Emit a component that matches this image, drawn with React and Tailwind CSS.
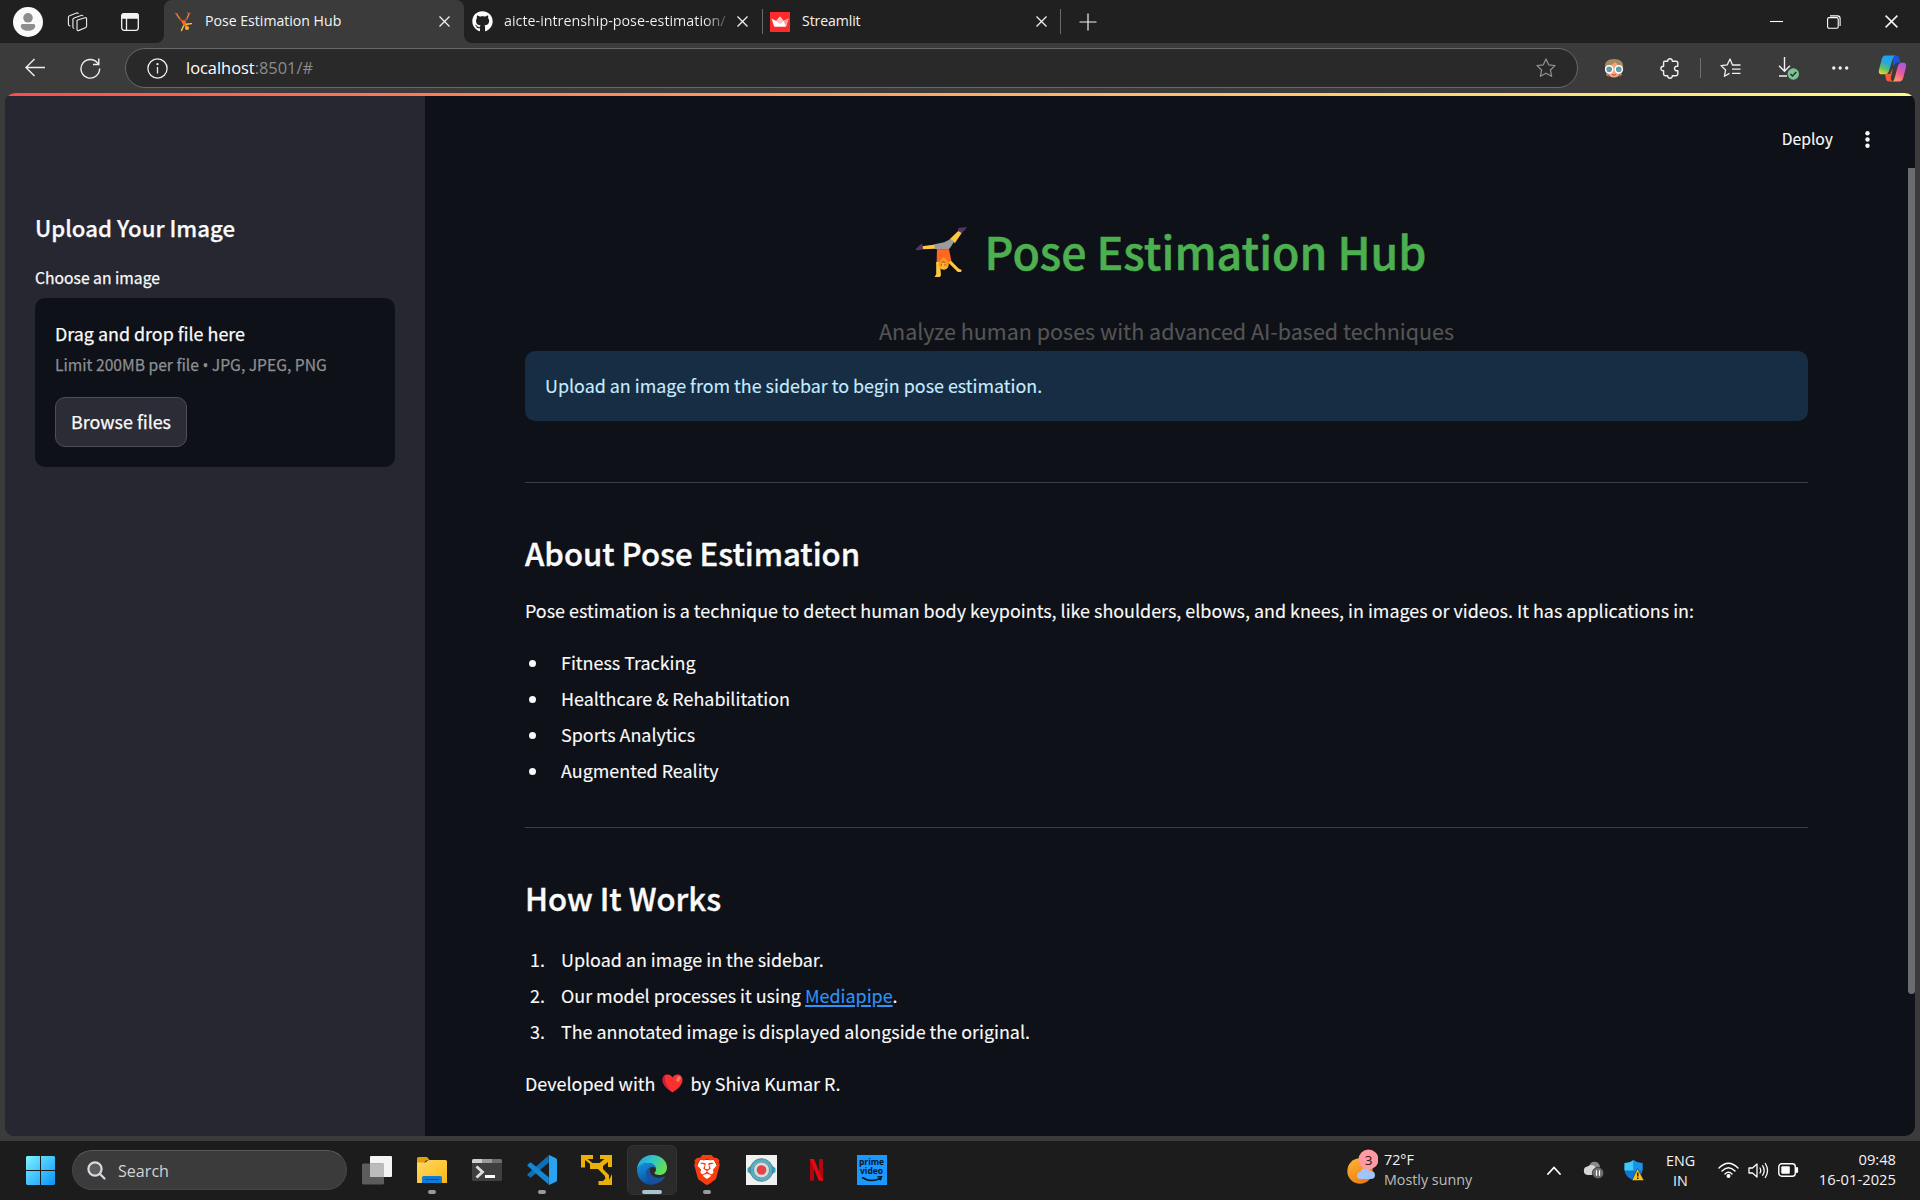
import React from "react";
import { FaGithub } from "react-icons/fa";
import { SiBrave } from "react-icons/si";

const CloseIcon = ({ size = 11 }) => (
  <svg width={size} height={size} viewBox="0 0 11 11" fill="none" stroke="#f2f2f2" strokeWidth="1.3">
    <path d="M.5.5l10 10M10.5.5l-10 10" />
  </svg>
);

const TabFavicon = () => (
  <svg width="18" height="20" viewBox="0 0 18 20" fill="none" strokeLinecap="round">
    <path d="M1.500 2.200L5 7M14 2l-2 4.500" stroke="#e8913c" strokeWidth="1.300" />
    <path d="M5 7l4 4 2.500-4" stroke="#b5502e" strokeWidth="2" />
    <path d="M8.500 10l1.800 3" stroke="#ff6723" strokeWidth="3.400" />
    <path d="M8.500 14l-2 4.500M11.500 12.200l5-.6" stroke="#ffc83d" strokeWidth="1.400" />
    <circle cx="12" cy="16" r="2" fill="#ffb02e" />
    <path d="M.5 1.300l2 .6M12.500 1l2.500.3" stroke="#d9482b" strokeWidth="1.300" />
  </svg>
);

const Cartwheel = () => (
  <svg className="mt-0.5" width="52" height="50" viewBox="138 80 130 151" preserveAspectRatio="none">
    <path d="M155 138l34-5v13l-34 1z" fill="#ffc83d" />
    <path d="M139 147l14-16 4 2 1 14-14 4z" fill="#533566" />
    <path d="M224 118l24-28 8 6-18 32z" fill="#ffc83d" />
    <path d="M246 83l22-3-5 9-9 9-8-6z" fill="#533566" />
    <path d="M187 132l24-6 16-10 9 8-10 19-4 5h-28l-7-2z" fill="#9b9b9b" />
    <path d="M193 147h30l6 36-8 8h-29z" fill="#ff6723" />
    <path d="M191 186h9l3 40-3 5h-13l4-8z" fill="#ffc83d" />
    <path d="M221 187l7-5 19 23 8 5-2 6h-8z" fill="#ffc83d" />
    <path d="M209 171c6 7 13 12 13 23 0 9-5 15-13 15s-12-6-12-14c0-10 7-15 12-24z" fill="#ffb02e" />
    <path d="M209 171c-5 9-12 14-12 24l4 8c0-9 3-14 8-19 5 5 8 10 8 18l5-8c0-11-7-16-13-23z" fill="#f59a1c" />
    <path d="M204 192v5M213 192v5M204 187q4-4 9 0" stroke="#6b3a1e" strokeWidth="2" fill="none" />
  </svg>
);

const Heart = () => (
  <svg width="21" height="19" viewBox="0 0 21 19">
    <path d="M10.500 18.500C6 15.500.5 11.500.5 6 .5 2.500 2.800.5 5.500.5c2.200 0 4 1.200 5 3 1-1.800 2.800-3 5-3 2.700 0 5 2 5 5.500 0 5.500-5.500 9.500-10 12.500z" fill="#f8312f" />
    <path d="M10.500 18.500C6 15.500.5 11.500.5 6 .5 3.500 1.600 1.800 3.200 1 2 7 5 13 10.500 18.500z" fill="#ca0b4a" opacity=".7" />
    <ellipse cx="16.500" cy="5" rx="2" ry="3" transform="rotate(25 16.500 5)" fill="#f37366" />
  </svg>
);

const TabStrip = () => (
  <div className="flex h-[43px] items-stretch bg-[#202020] text-[#f4f4f4]">
    <div className="flex w-[156px] items-center pl-[13px]">
      <svg width="30" height="30" viewBox="0 0 30 30">
        <circle cx="15" cy="15" r="15" fill="#fafafa" />
        <circle cx="15" cy="10.800" r="4.800" fill="#8d8d8d" />
        <path d="M9.500 17h11a1.700 1.700 0 0 1 1.700 1.700c0 3.300-3.200 5-7.200 5s-7.200-1.700-7.200-5A1.700 1.700 0 0 1 9.500 17z" fill="#8d8d8d" />
      </svg>
      <svg className="ml-6" width="21" height="22" viewBox="0 0 22 22" fill="none" stroke="#e8e8e8" strokeWidth="1.200" strokeLinejoin="round" strokeLinecap="round">
        <path d="M10.500 9.200L18.700 6.500q1.800-.4 1.800 1.300v7.700q0 1.200-1.200 1.600l-6.800 2.700q-2 .7-2-1.200v-8z" />
        <path d="M7.200 17.500q-1 0-1-1.200V8.500q0-1.200 1.200-1.600l7.300-2.800q1.200-.4 1.800.3" />
        <path d="M3 15q-1.500-.2-1.500-1.500V6q0-1.200 1.200-1.600l7.300-2.800q1.200-.3 1.700.5" />
      </svg>
      <svg className="ml-[33px]" width="18" height="18" viewBox="0 0 18 18" fill="none" stroke="#f2f2f2" strokeWidth="1.300">
        <rect x=".7" y=".7" width="16.600" height="16.600" rx="2.500" />
        <path d="M.7 5V3A2.300 2.300 0 0 1 3 .7h12A2.300 2.300 0 0 1 17.300 3v2z" fill="#f2f2f2" />
        <path d="M5.500 5v12" />
      </svg>
    </div>
    <div className="w-2 bg-[#3b3b3b]">
      <div className="h-full w-2 rounded-br-lg bg-[#202020]" />
    </div>
    <div className="flex w-[300px] items-center rounded-t-lg bg-[#3b3b3b] pr-[14px] pl-[11px]">
      <TabFavicon />
      <span className="ml-3 flex-1 pb-0.5 text-[14.1px] leading-5">Pose Estimation Hub</span>
      <CloseIcon />
    </div>
    <div className="w-2 bg-[#3b3b3b]">
      <div className="h-full w-2 rounded-bl-lg bg-[#202020]" />
    </div>
    <div className="flex w-[291px] items-center">
      <FaGithub className="size-[21px] text-white" />
      <span className="ml-[11px] w-[222px] overflow-hidden bg-gradient-to-r from-[#f4f4f4] from-90% to-[#555555] bg-clip-text pb-0.5 text-[14.300px] leading-5 whitespace-nowrap text-transparent">
        aicte-intrenship-pose-estimation/
      </span>
      <span className="ml-[11px]"><CloseIcon /></span>
      <span className="ml-[14px] h-[25px] w-px bg-[#6a6a6a]" />
    </div>
    <div className="flex w-[298px] items-center pl-[7px]">
      <svg width="20" height="20" viewBox="0 0 20 20">
        <rect width="20" height="20" fill="#ff2b2b" />
        <path d="M1.500 6.500l4.700 2.600L10 4.500l3.600 4.600 5-2.600-2.400 7.500q-.2.700-.9.700H4.800q-.6 0-.8-.7z" fill="#fff" />
        <path d="M10 4.500l3.600 4.600-3.600 3-3.800-3z" fill="#ffc3c3" />
        <path d="M13.600 9.100l5-2.600-2.600 8z" fill="#ff9d9d" />
      </svg>
      <span className="ml-3 flex-1 pb-0.5 text-[14.100px] leading-5 tracking-[-0.1px]">Streamlit</span>
      <CloseIcon />
      <span className="ml-[13px] h-[25px] w-px bg-[#6a6a6a]" />
    </div>
    <div className="flex flex-1 items-center pl-[18px]">
      <svg width="18" height="18" viewBox="0 0 18 18" stroke="#f2f2f2" strokeWidth="1.200">
        <path d="M9 .5v17M.5 9h17" />
      </svg>
    </div>
    <div className="flex items-center pr-[22px]">
      <svg width="13" height="13" viewBox="0 0 13 13" stroke="#fff" strokeWidth="1.100"><path d="M0 6.500h13" /></svg>
      <svg className="ml-11" width="14" height="14" viewBox="0 0 14 14" fill="none" stroke="#fff" strokeWidth="1.100">
        <rect x=".6" y="2.600" width="10.600" height="10.600" rx="1.500" />
        <path d="M3 .9h7.500a2.600 2.600 0 0 1 2.600 2.600V11" />
      </svg>
      <span className="ml-11"><CloseIcon size={13} /></span>
    </div>
  </div>
);

const STAR = "M10 1l2.700 5.800 6.300.8-4.600 4.400 1.200 6.300L10 15.200l-5.600 3.100L5.600 12 1 7.600l6.300-.8z";

const Toolbar = () => (
  <div className="flex h-[50px] items-center bg-[#3b3b3b]">
    <svg className="ml-[25px]" width="20" height="20" viewBox="0 0 20 20" fill="none" stroke="#f0f0f0" strokeWidth="1.400">
      <path d="M20 9.500H1M9.500 1L1 9.500l8.500 8.500" />
    </svg>
    <svg className="ml-[35px]" width="21" height="21" viewBox="0 0 21 21" fill="none" stroke="#f0f0f0" strokeWidth="1.400">
      <path d="M18.300 6A9.300 9.300 0 1 0 19.600 10.500M18.800.5V6.500H13" />
    </svg>
    <div className="ml-6 flex h-10 w-[1453px] items-center rounded-full border border-[#686868] bg-[#292929] px-[21px]">
      <svg width="21" height="21" viewBox="0 0 21 21" fill="none" stroke="#f0f0f0" strokeWidth="1.300">
        <circle cx="10.500" cy="10.500" r="9.600" />
        <path d="M10.500 9v6.500" />
        <circle cx="10.500" cy="6.200" r=".5" fill="#f0f0f0" />
      </svg>
      <span className="ml-[18px] flex-1 text-[16.400px] leading-5 text-[#8c8c8c]"><span className="text-white">localhost</span>:8501/#</span>
      <svg width="20" height="20" viewBox="0 0 20 20" fill="none" stroke="#8f8f8f" strokeWidth="1.300" strokeLinejoin="round"><path d={STAR} /></svg>
    </div>
    <svg className="ml-[26px]" width="20" height="19" viewBox="0 0 20 19">
      <path d="M1 9C0 3 4 0 10 0s10 3 9 9l-2 5H3z" fill="#a58a5f" />
      <path d="M3 7q6-1 8-4 2 3 6 4l-.5 7q-2 4.500-6.500 4.500T3.500 14z" fill="#f0a67c" />
      <path d="M3 12l-1 4 3 2zM17 12l1 4-3 2z" fill="#c97b52" />
      <circle cx="5.200" cy="10.300" r="3.600" fill="#5b9bab" stroke="#fff" strokeWidth="1.500" />
      <circle cx="14.800" cy="10.300" r="3.600" fill="#5b9bab" stroke="#fff" strokeWidth="1.500" />
      <path d="M8 15.500q2 1.400 4 0" stroke="#c24a3b" fill="none" />
    </svg>
    <svg className="ml-9" width="20" height="21" viewBox="0 0 20 21" fill="none" stroke="#f0f0f0" strokeWidth="1.400" strokeLinejoin="round">
      <path d="M4.500 3.300h3.200C7.500 1.800 8.500.8 10 .8s2.500 1 2.300 2.500H16q1.800 0 1.800 1.800v3.200c-1.800-.4-3.300.5-3.300 2.200s1.500 2.600 3.300 2.200V16q0 1.700-1.800 1.700h-3.700c.2 1.500-.8 2.500-2.300 2.500s-2.500-1-2.300-2.500H5.300Q3.600 17.700 3.600 16v-3.200C1.900 12.800.9 12 .9 10.500s1-2.300 2.700-2.300V5q0-1.700.9-1.700z" />
    </svg>
    <span className="ml-5 h-5 w-px bg-[#707070]" />
    <svg className="ml-[19px]" width="21" height="20" viewBox="0 0 21 20" fill="none" stroke="#f0f0f0" strokeWidth="1.300" strokeLinejoin="round">
      <path d="M13 6.800L12.400 6.700 10 1 7.300 6.800 1 7.600 5.600 12 4.400 18.300 9.500 15.400M12 7h8.500M12 11.200h8.500M12 15.400h8.500" />
    </svg>
    <svg className="ml-[37px]" width="22" height="24" viewBox="0 0 22 24" fill="none" stroke="#f0f0f0" strokeWidth="1.400">
      <path d="M6.500 1v14M1 9.800l5.500 5.500L12 9.800M1 20h8" />
      <circle cx="15.300" cy="18" r="5.700" fill="#7bc492" stroke="none" />
      <path d="M12.500 18l2 2 3.800-4" stroke="#2a2a2a" />
    </svg>
    <svg className="ml-8" width="17" height="4" viewBox="0 0 17 4" fill="#f0f0f0">
      <circle cx="1.800" cy="2" r="1.700" /><circle cx="8.200" cy="2" r="1.700" /><circle cx="14.700" cy="2" r="1.700" />
    </svg>
    <svg className="ml-[29px]" width="29" height="27" viewBox="0 0 29 27">
      <defs>
        <linearGradient id="cpA" x1=".6" y1="0" x2=".2" y2="1"><stop offset="0" stopColor="#18a5f2" /><stop offset=".4" stopColor="#2aa6dc" /><stop offset=".7" stopColor="#5fbf6a" /><stop offset="1" stopColor="#f4d51f" /></linearGradient>
        <linearGradient id="cpB" x1=".8" y1="0" x2=".3" y2="1"><stop offset="0" stopColor="#a256ea" /><stop offset=".5" stopColor="#e8589e" /><stop offset="1" stopColor="#ffa05c" /></linearGradient>
      </defs>
      <path d="M15 .5h3.500c1.700 0 2.300 1.200 2.700 2.700l1.300 4.300H19l-4 4z" fill="#1f52d8" />
      <path d="M7 19h5l3-6-2 9c-.3 2 .3 4.500 2.500 4.500H11c-2 0-2.700-1.300-3.200-3z" fill="#f35a3a" />
      <path d="M7.500.5H18c-2 0-2.800 1.700-3.300 3.300L11 16c-.7 2-1.800 3.300-4 3.300H3.700C.8 19.300.4 17 1.200 14L3.800 4C4.400 1.800 5.500.5 7.500.5z" fill="url(#cpA)" />
      <path d="M21.500 26.500H13.500c2 0 2.500-1.200 3-3l3.300-12.300c.7-2.200 1.700-3.500 4-3.500h1.500c2.900 0 3.300 2.300 2.500 5.300l-2.600 10c-.6 2.200-1.700 3.500-3.700 3.500z" fill="url(#cpB)" />
    </svg>
  </div>
);

const Sidebar = () => (
  <aside className="flex w-[420px] flex-col bg-[#262730] px-[30px] pt-[116px] text-[#fafafa] [-webkit-text-stroke:0.25px_currentColor]">
    <h2 className="text-[22.200px] leading-[30px] font-medium">Upload Your Image</h2>
    <label className="mt-6 text-[15.700px] leading-6">Choose an image</label>
    <div className="mt-2 flex h-[169px] w-[360px] flex-col items-start rounded-[10px] bg-[#0e1117] px-5 pt-[21px]">
      <span className="text-[17.900px] leading-7">Drag and drop file here</span>
      <span className="mt-[6px] text-[15.650px] leading-6 whitespace-nowrap text-[#8d8e92]">
        Limit 200MB per file <span className="font-['Open_Sans']">•</span> JPG, JPEG, PNG
      </span>
      <button className="mt-5 flex h-[50px] w-[132px] items-center justify-center rounded-[10px] border border-[#4d4e57] bg-[#2b2c36] pb-[3px] text-[17.900px] leading-7">
        Browse files
      </button>
    </div>
  </aside>
);

const uses = ["Fitness Tracking", "Healthcare & Rehabilitation", "Sports Analytics", "Augmented Reality"];

const steps = [
  "Upload an image in the sidebar.",
  <>Our model processes it using <a className="text-[#2f93f5] underline decoration-2 underline-offset-2">Mediapipe</a>.</>,
  "The annotated image is displayed alongside the original.",
];

const Heading = ({ children }) => (
  <h3 className="mt-[50px] text-[31.100px] leading-10 font-medium [-webkit-text-stroke:0.4px_#fafafa]">{children}</h3>
);

const Main = () => (
  <main className="flex flex-1 text-[17.920px] text-[#fafafa] [-webkit-text-stroke:0.12px_currentColor]">
    <div className="flex w-[1383px] shrink-0 flex-col pl-[100px]">
      <h1 className="mt-[127px] flex h-14 items-center justify-center pl-2 text-[44.700px] leading-[56px] font-medium text-[#4caf50] [-webkit-text-stroke:0.5px_#4caf50]">
        <Cartwheel />
        <span className="ml-[18px]">Pose Estimation Hub</span>
      </h1>
      <p className="mt-[35px] text-center text-[21.500px] leading-[34px] text-[#555555]">Analyze human poses with advanced AI-based techniques</p>
      <div className="mt-[3px] h-[70px] rounded-[10px] bg-[#172d43] px-5 pt-5 text-[17.900px] leading-7 text-[#c7ebff]">
        Upload an image from the sidebar to begin pose estimation.
      </div>
      <hr className="mt-[61px] border-[#3b3e44]" />
      <Heading>About Pose Estimation</Heading>
      <p className="mt-[22px] leading-[30px] whitespace-nowrap">
        Pose estimation is a technique to detect human body keypoints, like shoulders, elbows, and knees, in images or videos. It has applications in:
      </p>
      <ul className="mt-[19px]">
        {uses.map((u) => (
          <li key={u} className="flex items-center leading-9">
            <span className="mt-0.5 mr-[25px] ml-1 size-[7px] rounded-full bg-[#fafafa]" />
            {u}
          </li>
        ))}
      </ul>
      <hr className="mt-[39px] border-[#3b3e44]" />
      <Heading>How It Works</Heading>
      <ol className="mt-[23px]">
        {steps.map((s, i) => (
          <li key={i} className="flex leading-9">
            <span className="w-9 pl-[5px]">{i + 1}.</span>
            <span>{s}</span>
          </li>
        ))}
      </ol>
      <p className="mt-[19px] flex items-center leading-[30px]">
        Developed with
        <span className="mr-[7px] ml-[7px]"><Heart /></span>
        by Shiva Kumar R.
      </p>
    </div>
    <div className="flex w-[107px] shrink-0 flex-col items-end">
      <div className="flex h-[72px] items-center pt-[13px] pr-[45px]">
        <span className="text-[15.700px] leading-6">Deploy</span>
        <svg className="mt-px ml-8" width="5" height="17" viewBox="0 0 5 17" fill="#fafafa">
          <circle cx="2.500" cy="2.300" r="2.200" /><circle cx="2.500" cy="8.500" r="2.200" /><circle cx="2.500" cy="14.700" r="2.200" />
        </svg>
      </div>
      <div className="h-[826px] w-[7px] rounded-b bg-[#6b6c70]" />
    </div>
  </main>
);

const WindowsLogo = () => (
  <svg width="29" height="29" viewBox="0 0 29 29">
    <defs><linearGradient id="win" x1="0" y1="0" x2="1" y2="1"><stop offset="0" stopColor="#7df3ff" /><stop offset="1" stopColor="#0a93fb" /></linearGradient></defs>
    <path d="M1 0h13v14H0V1zM15 0h13l1 1v13H15zM0 15h14v14H1l-1-1zM15 15h14v13l-1 1H15z" fill="url(#win)" />
  </svg>
);

const TaskViewIcon = () => (
  <svg width="30" height="29" viewBox="0 0 30 29">
    <rect x="8" y="0" width="22" height="21" rx="1" fill="#f4f4f4" />
    <rect x="0" y="7.500" width="22" height="21" rx="1.500" fill="#5c5c5c" />
    <path d="M8 7.500h14V21H8z" fill="#bcbcbc" />
  </svg>
);

const FolderIcon = () => (
  <svg width="30" height="27" viewBox="0 0 30 27">
    <defs><linearGradient id="fold" x1="0" y1="0" x2="1" y2="1"><stop offset="0" stopColor="#ffd867" /><stop offset="1" stopColor="#fbb90f" /></linearGradient></defs>
    <path d="M0 1.500Q0 0 1.500 0H10l3 3.500h-4L7 6H0z" fill="#e0a00b" />
    <path d="M0 5.500h8l4-2.500h16.500Q30 3 30 4.500v21.500H0z" fill="url(#fold)" />
    <path d="M5 26v-5.500Q5 19 6.500 19h17q1.500 0 1.500 1.500V26z" fill="#0f7bd4" />
    <path d="M8 22.500h14" stroke="#0b4f92" />
  </svg>
);

const TerminalIcon = () => (
  <svg width="30" height="22" viewBox="0 0 30 22">
    <rect width="30" height="22" rx="1.500" fill="#3f3f3f" />
    <path d="M0 4V1.500Q0 0 1.500 0H20v4z" fill="#cfcfcf" />
    <path d="M10 0h10v4H10z" fill="#9a9a9a" />
    <path d="M20 0h8.500Q30 0 30 1.500V4H20z" fill="#6e6e6e" />
    <path d="M4.500 7.500l6 5.500-6 5.500" stroke="#dedede" strokeWidth="2.800" fill="none" />
    <path d="M13 17.500h10" stroke="#fff" strokeWidth="3" />
  </svg>
);

const VsCodeIcon = () => (
  <svg width="30" height="30" viewBox="0 0 30 30">
    <path d="M22 7.500L4.300 22.200Q3.500 22.800 2.800 22.200L.6 20.200Q0 19.500.6 18.900L21.500.5z" fill="#0b70b8" />
    <path d="M22 22.500L4.300 7.800Q3.500 7.200 2.800 7.800L.6 9.800Q0 10.500.6 11.100L21.500 29.500z" fill="#1586cf" />
    <path d="M21.500.3Q22 0 22.700.3L29 3.300q1 .5 1 1.500v20.400q0 1-1 1.500l-6.300 3q-.7.300-1.200 0 .5-.2.500-1.200V1.500q0-1-.5-1.200z" fill="#27a3f0" />
  </svg>
);

const VmwareIcon = () => (
  <svg width="31" height="30" viewBox="0 0 31 30" fill="#ecb00b">
    <path d="M0 0h12v4H6.500l5 4h7l5-4H19V0h12v12h-4V7l-5 4v3l6 6v5l3-6v11H17.500v-4H22l2.500-2.500-1-3-6.500-6.500H9V9L4 5v7.500H0z" />
  </svg>
);

const EdgeIcon = () => (
  <svg width="30" height="30" viewBox="0 0 30 30">
    <defs>
      <linearGradient id="edA" x1="0" y1="0" x2="1" y2=".4"><stop offset="0" stopColor="#1fa0dc" /><stop offset=".5" stopColor="#2fc3cf" /><stop offset="1" stopColor="#62df55" /></linearGradient>
      <linearGradient id="edB" x1="0" y1="0" x2=".5" y2="1"><stop offset="0" stopColor="#1695df" /><stop offset="1" stopColor="#0b50a0" /></linearGradient>
    </defs>
    <path d="M15 0c9 0 15 6 15 12.500 0 5-3.500 7.500-7.500 7.500-3.500 0-5-1.200-5-2 0-.7 1.500-1.200 1.500-3.800C19 11 15.500 8 11 8 5.500 8 1 11.500 0 15 0 6.500 6.800 0 15 0z" fill="url(#edA)" />
    <path d="M0 15c.5-4 5-7 10.500-7 4.500 0 8 2.200 8.500 5.500C17.500 11.500 12 11 10 16c-1.500 5 2 11.500 9 12.800-9 3.500-19-3.300-19-13.800z" fill="url(#edB)" />
    <path d="M13.500 12.500C9.500 14 8.500 18 10 22c1.500 4.500 5.500 6.500 9 6.800 3.500-1 6.800-3.300 9-6.600.5-.7-.2-1-1-.6-6 3-13.500 0-14-5-.1-1.500 0-3 .5-4.100z" fill="#17519f" />
  </svg>
);

const BraveIcon = () => (
  <span className="relative flex items-center justify-center">
    <svg width="26" height="30" viewBox="0 0 26 30"><path d="M6 5h14l3 6-3 11-7 5-7-5-3-11z" fill="#fff" /></svg>
    <SiBrave className="absolute size-[30px] text-[#fb3d0e]" />
  </span>
);

const RecorderIcon = () => (
  <svg width="31" height="30" viewBox="0 0 31 30">
    <rect width="31" height="30" fill="#f1f1ef" />
    <path d="M1.500 13l5-3v10l-5-3zM29.500 13l-5-3v10l5-3z" fill="#35a3bd" />
    <circle cx="15.500" cy="15" r="9.800" fill="#d3dcde" stroke="#4db2c9" strokeWidth="2.800" />
    <circle cx="15.500" cy="15" r="8" fill="none" stroke="#5d6e75" strokeWidth=".8" />
    <circle cx="15.500" cy="15" r="11.400" fill="none" stroke="#436a78" strokeWidth=".7" />
    <circle cx="15.500" cy="15" r="4.800" fill="#e04646" />
  </svg>
);

const NetflixIcon = () => (
  <svg width="13" height="22" viewBox="0 0 13 22">
    <path d="M0 0h4v21.500L0 22zM9 0h4v22l-4-.5z" fill="#b1060f" />
    <path d="M0 0h4l9 22-4.300-.5z" fill="#e50914" />
  </svg>
);

const PrimeIcon = () => (
  <span className="flex h-[30px] w-[30px] flex-col items-center bg-[#1a98ff] pt-[3px] text-[8.500px] font-bold text-[#06151f]">
    <span className="flex h-[9px] items-center leading-none">prime</span>
    <span className="flex h-[9px] items-center leading-none">video</span>
    <svg width="22" height="6" viewBox="0 0 22 6" fill="none" stroke="#06151f" strokeWidth="1.500"><path d="M1 1.500q9 5.500 18 1M16.500.8l4-.2-1.300 3.600" /></svg>
  </span>
);

const apps = [
  { icon: <TaskViewIcon /> },
  { icon: <FolderIcon />, dot: true },
  { icon: <TerminalIcon /> },
  { icon: <VsCodeIcon />, dot: true },
  { icon: <VmwareIcon /> },
  { icon: <EdgeIcon />, active: true },
  { icon: <BraveIcon />, dot: true },
  { icon: <RecorderIcon /> },
  { icon: <NetflixIcon /> },
  { icon: <PrimeIcon /> },
];

const Taskbar = () => (
  <div className="flex h-[59px] items-start bg-[#1c1c1c] pt-1 text-[14.700px] leading-5 text-[#f4f4f4]">
    <div className="flex h-[50px] w-full items-center pr-6 pl-[26px]">
      <WindowsLogo />
      <div className="ml-[17px] flex h-10 w-[275px] items-center rounded-full border border-[#464646] border-t-[#5a5a5a] bg-[#3b3b3b] pl-3.5 text-[16.100px] text-[#d2d2d2]">
        <svg width="19" height="19" viewBox="0 0 19 19" fill="none" stroke="#d8dadd" strokeWidth="2.200" strokeLinecap="round">
          <circle cx="8" cy="8" r="6.600" fill="#5a5d62" />
          <path d="M13 13l4.500 4.500" />
        </svg>
        <span className="mt-px ml-3">Search</span>
      </div>
      <div className="ml-[2px] flex">
        {apps.map((a, i) => (
          <div key={i} className="flex w-[55px] justify-center">
            <div className={a.active ? "flex h-[50px] w-[50px] flex-col items-center justify-end rounded-md border border-[#333333] bg-[#2a2a2a]" : "flex h-[50px] w-[50px] flex-col items-center justify-end border border-transparent"}>
              <div className="mb-[5px] flex h-[30px] items-center">{a.icon}</div>
              <div className={a.active ? "h-1 w-5 rounded-full bg-[#a8c4cc]" : a.dot ? "h-1 w-2 rounded-full bg-[#9a9a9a]" : "h-1 w-2"} />
            </div>
          </div>
        ))}
      </div>
      <div className="flex-1" />
      <div className="flex items-center">
        <svg className="mb-1.5" width="31" height="36" viewBox="0 0 31 36">
          <defs><linearGradient id="sun" x1=".2" y1="0" x2=".7" y2="1"><stop offset="0" stopColor="#fbb331" /><stop offset="1" stopColor="#ee7a12" /></linearGradient></defs>
          <circle cx="13" cy="22" r="12.700" fill="url(#sun)" />
          <path d="M13.500 30a3.500 3.500 0 0 1 0-7q1-4 5-4 3.500 0 4.500 3 5 0 5 4t-4 4z" fill="#a3c4fb" />
          <circle cx="21.500" cy="10.500" r="10" fill="#ff99a4" />
          <text x="21.500" y="15.500" textAnchor="middle" fontSize="13.500" fontFamily="Open Sans, sans-serif" fill="#1c1c1c">3</text>
        </svg>
        <div className="ml-[6px] flex w-[163px] flex-col pb-px text-[14.300px]">
          <span>72°F</span>
          <span className="text-[#bdbdbd]">Mostly sunny</span>
        </div>
      </div>
      <svg width="14" height="9" viewBox="0 0 14 9" fill="none" stroke="#fff" strokeWidth="1.800" strokeLinecap="round"><path d="M1 8l6-6.500L13 8" /></svg>
      <svg className="ml-[22px]" width="21" height="18" viewBox="0 0 21 18">
        <path d="M6 6Q7 .8 11.500.8q4.500 0 5.500 5l-1 5H7z" fill="#8a8a8a" />
        <path d="M4.500 14a4.300 4.300 0 0 1 0-8.500Q6 4 8.500 4q3 0 4.500 3l4 2v5z" fill="#d6d6d6" />
        <circle cx="15" cy="12" r="5.700" fill="#6c6c6c" stroke="#1c1c1c" strokeWidth=".6" />
        <path d="M13.500 9.300v5.400M16.500 9.300v5.400" stroke="#fff" strokeWidth="1.200" />
      </svg>
      <svg className="ml-5" width="20" height="21" viewBox="0 0 20 21">
        <path d="M9.500 0Q13 3 18.500 3v7q0 6.500-9 10.500Q.5 16.500.5 10V3Q6 3 9.500 0z" fill="#0f76d3" />
        <path d="M9.500 0v10.500H.5V3Q6 3 9.500 0z" fill="#3ccbf4" />
        <path d="M9.500 0v10.500h9V3Q13 3 9.500 0z" fill="#1a92e5" />
        <path d="M13.500 8.500L20 20.500H8z" fill="#fcc419" stroke="#1c1c1c" strokeWidth=".5" />
        <path d="M13.800 12.500v4M13.800 17.500v1.500" stroke="#111" strokeWidth="1.400" />
      </svg>
      <div className="ml-[17px] flex w-[39px] flex-col items-center pt-px text-[14.300px]">
        <span>ENG</span>
        <span>IN</span>
      </div>
      <svg className="ml-[18px]" width="21" height="16" viewBox="0 0 21 16" fill="none" stroke="#fff" strokeWidth="1.400" strokeLinecap="round">
        <path d="M1 6Q10.500-3.500 20 6M4 9Q10.500 2.500 17 9M7 12q3.500-3.300 7 0" />
        <circle cx="10.500" cy="14" r="1.300" fill="#fff" />
      </svg>
      <svg className="ml-[9px]" width="21" height="17" viewBox="0 0 21 17" fill="none" stroke="#fff" strokeWidth="1.300" strokeLinecap="round" strokeLinejoin="round">
        <path d="M1 6v5h3.500l4.500 4V2L4.500 6zM12 6q1.500 2.500 0 5M14.700 3.800q3 4.700 0 9.400M17.300 1.500q4.500 7 0 14" />
      </svg>
      <svg className="ml-[9px]" width="21" height="14" viewBox="0 0 21 14" fill="none" stroke="#fff" strokeWidth="1.400">
        <rect x=".8" y=".8" width="16.500" height="12.400" rx="3" />
        <rect x="3.300" y="3.300" width="8.500" height="7.400" rx="1" fill="#fff" stroke="none" />
        <path d="M19 5v4" strokeWidth="2.200" strokeLinecap="round" />
      </svg>
      <div className="ml-[17px] flex w-[80px] flex-col items-end pb-0.5">
        <span>09:48</span>
        <span className="tracking-[0.05px]">16-01-2025</span>
      </div>
    </div>
  </div>
);

export default function App() {
  return (
    <div className="flex h-[1200px] w-[1920px] flex-col overflow-hidden bg-[#3b3b3b] font-['Open_Sans',sans-serif]">
      <TabStrip />
      <Toolbar />
      <div className="mx-[5px] flex h-[1043px] flex-col overflow-hidden rounded-[10px] bg-[#0e1117] font-['Noto_Sans_CJK_SC',sans-serif]">
        <div className="h-[3px] shrink-0 bg-gradient-to-r from-[#ff4b4b] to-[#fffd80]" />
        <div className="flex flex-1">
          <Sidebar />
          <Main />
        </div>
      </div>
      <div className="h-[5px]" />
      <Taskbar />
    </div>
  );
}
